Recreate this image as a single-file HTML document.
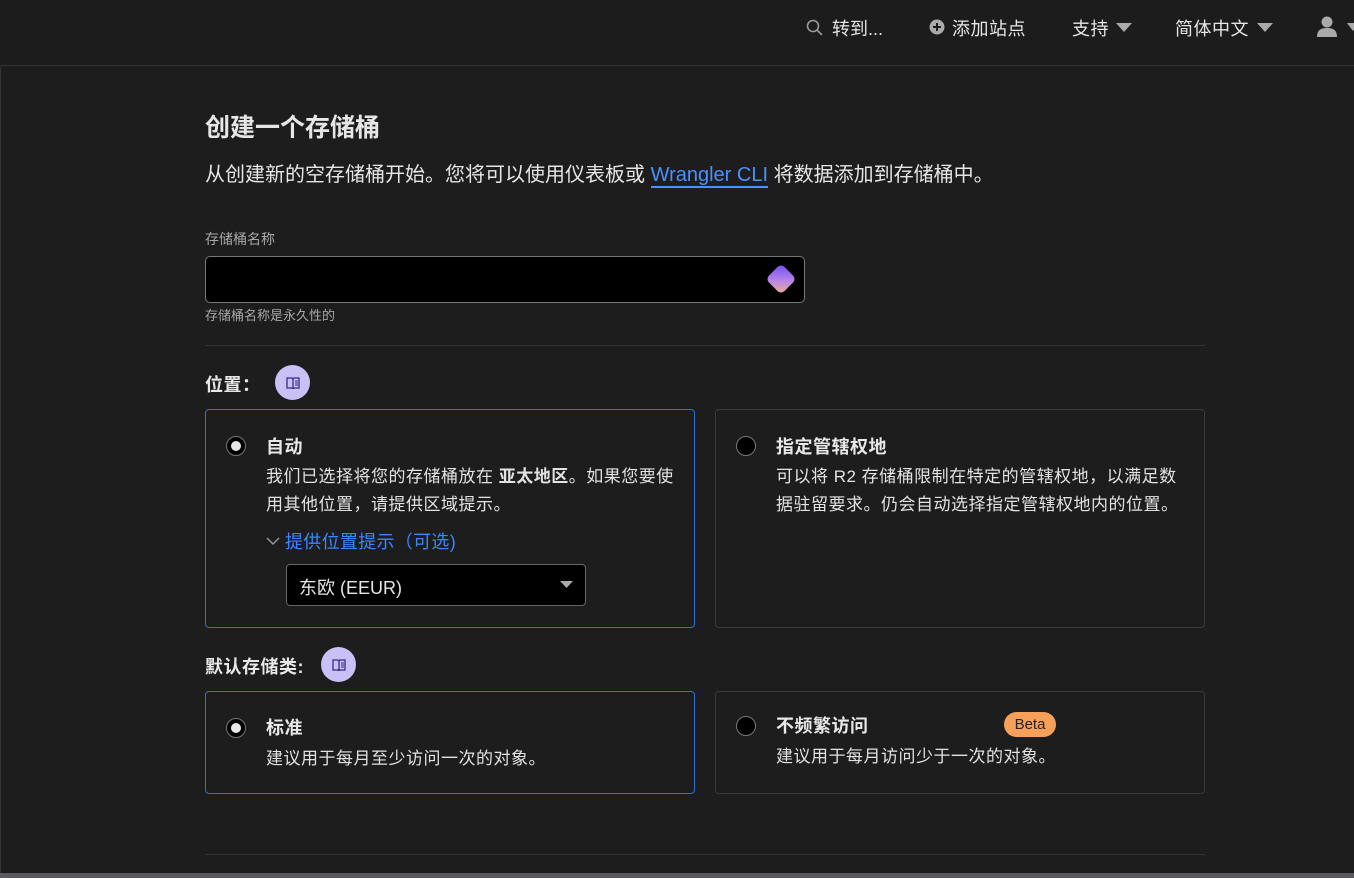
<!DOCTYPE html>
<html><head><meta charset="utf-8"><style>
*{margin:0;padding:0;box-sizing:border-box}
body{width:1354px;height:878px;background:#1d1d1d;color:#e6e6e6;font-family:"Liberation Sans","Noto Sans CJK SC",sans-serif;position:relative;overflow:hidden}
.a{position:absolute;white-space:nowrap}
.card{position:absolute;border:1px solid #3a3a3a;border-radius:4px}
.sel{border-color:#2f6fd8}
.radio{position:absolute;width:20px;height:20px;border-radius:50%;background:#000;border:1px solid #777}
.radio.on::after{content:"";position:absolute;left:4px;top:4px;width:10px;height:10px;border-radius:50%;background:#e8e8e8}
.ic{position:absolute;width:35px;height:35px;border-radius:50%;background:#c9c0f5;display:flex;align-items:center;justify-content:center}
.t{font-size:18px;font-weight:bold;color:#e8e8e8;letter-spacing:0.5px}
.d{font-size:17px;line-height:28px;color:#e2e2e2;letter-spacing:0.5px}
</style></head><body>
<div class="a" style="left:0;top:0;width:1354px;height:66px;border-bottom:1px solid #333;background:#1c1c1c"></div>
<div class="a" style="left:0;top:67px;width:1px;height:806px;background:#333"></div>
<svg class="a" style="left:805px;top:18px" width="20" height="20" viewBox="0 0 20 20"><circle cx="8" cy="8" r="5.5" fill="none" stroke="#999" stroke-width="1.6"/><path d="M12 12l5 5" stroke="#999" stroke-width="1.6"/></svg>
<div class="a" style="left:832px;top:15px;font-size:18px">转到...</div>
<svg class="a" style="left:929px;top:19px" width="16" height="16" viewBox="0 0 16 16"><circle cx="8" cy="8" r="7.5" fill="#aaa"/><path d="M8 4v8M4 8h8" stroke="#1c1c1c" stroke-width="2"/></svg>
<div class="a" style="left:952px;top:15px;font-size:18px;letter-spacing:0.5px">添加站点</div>
<div class="a" style="left:1072px;top:15px;font-size:18px;letter-spacing:0.5px">支持</div>
<svg class="a" style="left:1115px;top:22px" width="18" height="10"><path d="M1 1h16l-8 9z" fill="#aaa"/></svg>
<div class="a" style="left:1175px;top:15px;font-size:18px;letter-spacing:0.5px">简体中文</div>
<svg class="a" style="left:1256px;top:22px" width="18" height="10"><path d="M1 1h16l-8 9z" fill="#aaa"/></svg>
<svg class="a" style="left:1316px;top:15px" width="22" height="24" viewBox="0 0 22 24"><circle cx="11" cy="7" r="5.5" fill="#aaa"/><path d="M1 22c0-7 4-9 10-9s10 2 10 9z" fill="#aaa"/></svg>
<svg class="a" style="left:1346px;top:22px" width="10" height="10"><path d="M1 1h12l-6 8z" fill="#aaa"/></svg>

<div class="a" style="left:205px;top:108px;font-size:25px;font-weight:bold">创建一个存储桶</div>
<div class="a" style="left:205px;top:158px;font-size:20px">从创建新的空存储桶开始。您将可以使用仪表板或 <span style="color:#4a90ff;border-bottom:2px solid #4a90ff">Wrangler CLI</span> 将数据添加到存储桶中。</div>
<div class="a" style="left:205px;top:229px;font-size:14px;color:#a8a8a8">存储桶名称</div>
<div class="a" style="left:205px;top:256px;width:600px;height:47px;background:#000;border:1px solid #777;border-radius:5px"></div>
<div class="a" style="left:766px;top:264px;width:30px;height:30px;">
<div style="position:absolute;left:4px;top:4px;width:22px;height:22px;border-radius:5px;transform:rotate(45deg);background:linear-gradient(135deg,#6c4cf0,#b784e8 55%,#f0b48c)"></div></div>
<div class="a" style="left:205px;top:305px;font-size:13px;color:#a8a8a8">存储桶名称是永久性的</div>
<div class="a" style="left:205px;top:345px;width:1000px;height:1px;background:#333"></div>

<div class="a t" style="left:205px;top:371px">位置：</div>
<div class="ic" style="left:275px;top:365px"><svg width="14" height="12" viewBox="0 0 14 12"><path d="M1 1h5l1 1 1-1h5v10H8l-1 1-1-1H1z M7 2v9" fill="none" stroke="#3a2a8a" stroke-width="1.3"/><path d="M9 4h3M9 6h3M9 8h3" stroke="#3a2a8a"/></svg></div>

<div class="card sel" style="left:205px;top:409px;width:490px;height:219px"></div>
<div class="radio on" style="left:226px;top:436px"></div>
<div class="a t" style="left:266px;top:433px">自动</div>
<div class="a d" style="left:266px;top:463px">我们已选择将您的存储桶放在 <b>亚太地区</b>。如果您要使<br>用其他位置，请提供区域提示。</div>
<svg class="a" style="left:266px;top:536px" width="14" height="10"><path d="M1 2l6 6 6-6" fill="none" stroke="#999" stroke-width="1.4"/></svg>
<div class="a" style="left:285px;top:528px;font-size:18px;color:#3a86ff;letter-spacing:0.3px">提供位置提示（可选)</div>
<div class="a" style="left:286px;top:564px;width:300px;height:42px;background:#000;border:1px solid #666;border-radius:4px"></div>
<div class="a" style="left:299px;top:574px;font-size:18px">东欧 (EEUR)</div>
<svg class="a" style="left:560px;top:581px" width="14" height="8"><path d="M0 0h13l-6.5 7z" fill="#aaa"/></svg>

<div class="card" style="left:715px;top:409px;width:490px;height:219px"></div>
<div class="radio" style="left:736px;top:436px"></div>
<div class="a t" style="left:776px;top:433px">指定管辖权地</div>
<div class="a d" style="left:776px;top:463px">可以将 R2 存储桶限制在特定的管辖权地，以满足数<br>据驻留要求。仍会自动选择指定管辖权地内的位置。</div>

<div class="a t" style="left:205px;top:653px">默认存储类:</div>
<div class="ic" style="left:321px;top:647px"><svg width="14" height="12" viewBox="0 0 14 12"><path d="M1 1h5l1 1 1-1h5v10H8l-1 1-1-1H1z M7 2v9" fill="none" stroke="#3a2a8a" stroke-width="1.3"/><path d="M9 4h3M9 6h3M9 8h3" stroke="#3a2a8a"/></svg></div>

<div class="card sel" style="left:205px;top:691px;width:490px;height:103px"></div>
<div class="radio on" style="left:226px;top:718px"></div>
<div class="a t" style="left:266px;top:714px">标准</div>
<div class="a d" style="left:266px;top:745px">建议用于每月至少访问一次的对象。</div>

<div class="card" style="left:715px;top:691px;width:490px;height:103px"></div>
<div class="radio" style="left:736px;top:716px"></div>
<div class="a t" style="left:776px;top:712px">不频繁访问</div>
<div class="a" style="left:1004px;top:712px;width:52px;height:25px;border-radius:13px;background:#f6a05a;color:#222;font-size:15px;text-align:center;line-height:25px">Beta</div>
<div class="a d" style="left:776px;top:743px">建议用于每月访问少于一次的对象。</div>

<div class="a" style="left:205px;top:854px;width:1000px;height:1px;background:#333"></div>
<div class="a" style="left:0;top:873px;width:1354px;height:5px;background:#5a5a5c"></div>
</body></html>
